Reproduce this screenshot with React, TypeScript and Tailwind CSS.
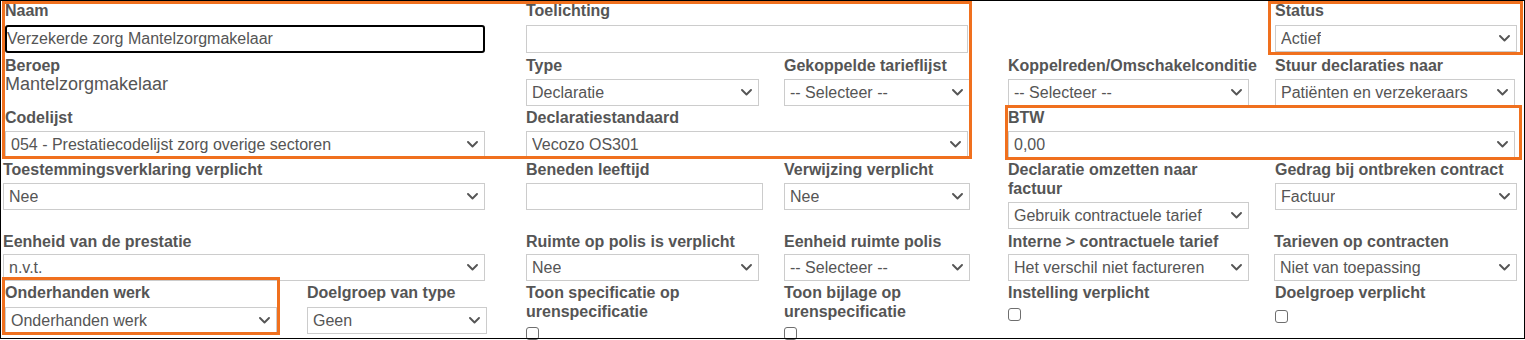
import React from "react";

const Chevron = () => (
  <svg width="11" height="7" viewBox="0 0 11 7" className="shrink-0">
    <path d="M1 1 L5.5 5.5 L10 1" fill="none" stroke="#555" strokeWidth="1.9" strokeLinecap="round" strokeLinejoin="round" />
  </svg>
);

const Label = ({ children, nowrap }: { children: React.ReactNode; nowrap?: boolean }) => (
  <div className={`font-bold text-[16px] leading-[19px] text-[#555] ${nowrap ? "whitespace-nowrap" : ""}`}>{children}</div>
);

const Select = ({ value, cls }: { value: string; cls: string }) => (
  <div className={`flex items-center justify-between border border-[#cccccc] bg-white pl-[5px] pr-[6px] text-[16px] text-[#555] ${cls}`}>
    <span className="whitespace-nowrap overflow-hidden">{value}</span>
    <Chevron />
  </div>
);

const TextBox = ({ cls }: { cls: string }) => <div className={`border border-[#cccccc] bg-white ${cls}`} />;

const Check = ({ cls }: { cls: string }) => (
  <div className={`w-[13px] h-[13px] border border-[#6e6e6e] rounded-[3px] bg-white ${cls}`} />
);

export default function App() {
  return (
    <div className="relative w-[1525px] h-[340px] overflow-hidden bg-white" style={{ fontFamily: '"Liberation Sans", Arial, sans-serif' }}>
      {/* Row 1 */}
      <div className="flex items-start mt-[1px]">
        <div className="ml-[5px] w-[480px]">
          <Label>Naam</Label>
          <div className="mt-[5px] h-[28px] border-2 border-black rounded-[3px] flex items-center text-[16px] text-[#555] whitespace-nowrap">
            Verzekerde zorg Mantelzorgmakelaar
          </div>
        </div>
        <div className="ml-[41px] w-[442px]">
          <Label>Toelichting</Label>
          <TextBox cls="mt-[5px] h-[28px]" />
        </div>
        <div className="ml-[307px] w-[242px]">
          <Label>Status</Label>
          <Select value="Actief" cls="mt-[5px] h-[27px]" />
        </div>
      </div>

      {/* Row 2 */}
      <div className="flex items-start mt-[3px]">
        <div className="ml-[5px] w-[480px]">
          <Label>Beroep</Label>
          <div className="-mt-[1px] text-[18px] leading-[20px] text-[#555]">Mantelzorgmakelaar</div>
        </div>
        <div className="ml-[41px] w-[233px]">
          <Label>Type</Label>
          <Select value="Declaratie" cls="mt-[4px] h-[27px]" />
        </div>
        <div className="ml-[25px] w-[186px]">
          <Label>Gekoppelde tarieflijst</Label>
          <Select value="-- Selecteer --" cls="mt-[4px] h-[27px]" />
        </div>
        <div className="ml-[38px] w-[241px]">
          <Label nowrap>Koppelreden/Omschakelconditie</Label>
          <Select value="-- Selecteer --" cls="mt-[4px] h-[27px]" />
        </div>
        <div className="ml-[26px] w-[240px]">
          <Label>Stuur declaraties naar</Label>
          <Select value="Patiënten en verzekeraars" cls="mt-[4px] h-[27px]" />
        </div>
      </div>

      {/* Row 3 */}
      <div className="flex items-start mt-[2px]">
        <div className="ml-[5px] w-[480px]">
          <Label>Codelijst</Label>
          <Select value="054 - Prestatiecodelijst zorg overige sectoren" cls="mt-[4px] h-[27px]" />
        </div>
        <div className="ml-[41px] w-[442px]">
          <Label>Declaratiestandaard</Label>
          <Select value="Vecozo OS301" cls="mt-[4px] h-[27px]" />
        </div>
        <div className="ml-[40px] w-[507px]">
          <Label>BTW</Label>
          <Select value="0,00" cls="mt-[4px] h-[27px]" />
        </div>
      </div>

      {/* Row 4 */}
      <div className="flex items-start mt-[2px]">
        <div className="ml-[3px] w-[482px]">
          <Label>Toestemmingsverklaring verplicht</Label>
          <Select value="Nee" cls="mt-[4px] h-[27px]" />
        </div>
        <div className="ml-[41px] w-[237px]">
          <Label>Beneden leeftijd</Label>
          <TextBox cls="mt-[4px] h-[27px]" />
        </div>
        <div className="ml-[21px] w-[186px]">
          <Label>Verwijzing verplicht</Label>
          <Select value="Nee" cls="mt-[4px] h-[27px]" />
        </div>
        <div className="ml-[38px] w-[241px]">
          <Label>Declaratie omzetten naar factuur</Label>
          <Select value="Gebruik contractuele tarief" cls="mt-[4px] h-[27px]" />
        </div>
        <div className="ml-[26px] w-[242px]">
          <Label>Gedrag bij ontbreken contract</Label>
          <Select value="Factuur" cls="mt-[4px] h-[27px]" />
        </div>
      </div>

      {/* Row 5 */}
      <div className="flex items-start mt-[3px]">
        <div className="ml-[3px] w-[482px]">
          <Label>Eenheid van de prestatie</Label>
          <Select value="n.v.t." cls="mt-[3px] h-[27px]" />
        </div>
        <div className="ml-[41px] w-[233px]">
          <Label>Ruimte op polis is verplicht</Label>
          <Select value="Nee" cls="mt-[3px] h-[27px]" />
        </div>
        <div className="ml-[25px] w-[186px]">
          <Label>Eenheid ruimte polis</Label>
          <Select value="-- Selecteer --" cls="mt-[3px] h-[27px]" />
        </div>
        <div className="ml-[38px] w-[241px]">
          <Label>Interne &gt; contractuele tarief</Label>
          <Select value="Het verschil niet factureren" cls="mt-[3px] h-[27px]" />
        </div>
        <div className="ml-[25px] w-[243px]">
          <Label>Tarieven op contracten</Label>
          <Select value="Niet van toepassing" cls="mt-[3px] h-[27px]" />
        </div>
      </div>

      {/* Row 6 */}
      <div className="flex items-start mt-[2px]">
        <div className="ml-[5px] w-[272px]">
          <Label>Onderhanden werk</Label>
          <Select value="Onderhanden werk" cls="mt-[5px] h-[27px]" />
        </div>
        <div className="ml-[30px] w-[180px]">
          <Label>Doelgroep van type</Label>
          <Select value="Geen" cls="mt-[5px] h-[27px]" />
        </div>
        <div className="ml-[39px] w-[233px]">
          <Label>Toon specificatie op urenspecificatie</Label>
          <Check cls="mt-[6px]" />
        </div>
        <div className="ml-[25px] w-[186px]">
          <Label>Toon bijlage op urenspecificatie</Label>
          <Check cls="mt-[6px]" />
        </div>
        <div className="ml-[38px] w-[241px]">
          <Label>Instelling verplicht</Label>
          <Check cls="mt-[6px]" />
        </div>
        <div className="ml-[26px] w-[242px]">
          <Label>Doelgroep verplicht</Label>
          <Check cls="mt-[8px]" />
        </div>
      </div>

      {/* Orange annotation frames */}
      <div className="absolute left-[2px] top-[1px] w-[970px] h-[158px] border-[3px] border-[#f0701e] pointer-events-none" />
      <div className="absolute left-[1268px] top-[1px] w-[255px] h-[54px] border-[3px] border-[#f0701e] pointer-events-none" />
      <div className="absolute left-[1005px] top-[105px] w-[517px] h-[55px] border-[3px] border-[#f0701e] pointer-events-none" />
      <div className="absolute left-[2px] top-[277px] w-[278px] h-[58px] border-[3px] border-[#f0701e] pointer-events-none" />

      {/* Screenshot frame */}
      <div className="absolute left-0 top-0 w-[1525px] h-[339px] border border-black pointer-events-none" />
    </div>
  );
}
